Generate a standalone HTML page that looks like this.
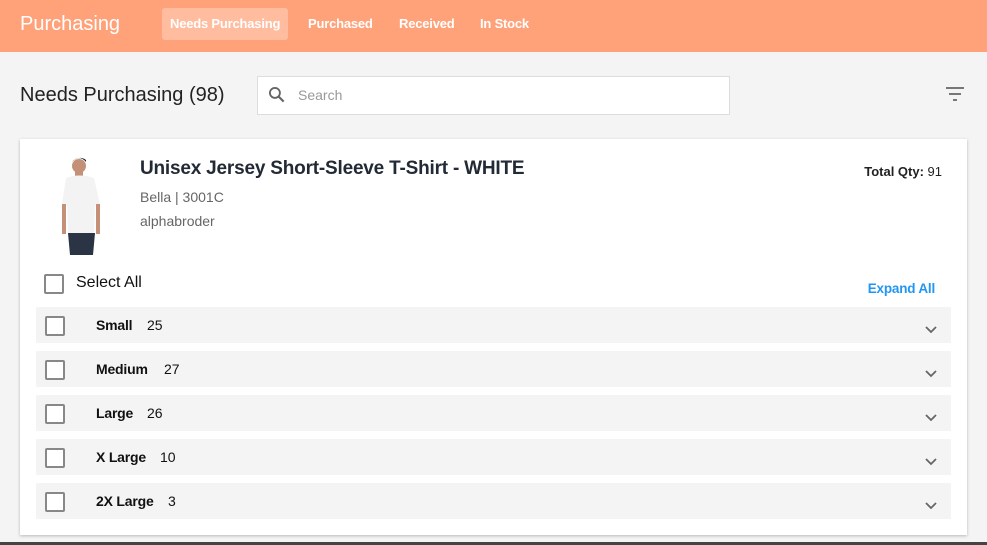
<!DOCTYPE html>
<html><head><style>
*{margin:0;padding:0;box-sizing:border-box}
body{width:987px;height:545px;background:#f4f4f4;font-family:"Liberation Sans",Arial,sans-serif;position:relative;overflow:hidden}
.top{position:absolute;left:0;top:0;width:987px;height:52px;background:#ffa179}
.brand{position:absolute;left:20px;top:13px;color:#fff;font-size:20px}
.nav{position:absolute;top:8px;height:32px;line-height:32px;color:#fff;font-size:13px;font-weight:bold;padding:0 8px;border-radius:3px;letter-spacing:-.2px}
.h1{position:absolute;left:20px;top:84px;font-size:20px;color:#222}
.search{position:absolute;left:257px;top:76px;width:473px;height:39px;background:#fff;border:1px solid #ddd}
.search span{position:absolute;left:40px;top:10px;font-size:14px;color:#999}
.card{position:absolute;left:20px;top:139px;width:947px;height:396px;background:#fff;box-shadow:0 1px 3px rgba(0,0,0,.25)}
.title{position:absolute;left:120px;top:19px;font-size:19px;color:#222a35;font-weight:bold;letter-spacing:-.2px}
.sub{position:absolute;left:120px;font-size:14px;color:#666}
.tq{position:absolute;right:25px;top:25px;font-size:13px;color:#222}
.cb{position:absolute;width:20px;height:20px;border:2px solid #888;border-radius:2px;background:#fff}
.row{position:absolute;left:16px;width:915px;height:36px;background:#f4f4f4}
.row .cb{left:9px;top:9px}
.row .l{position:absolute;left:60px;top:10px;font-size:14px;font-weight:bold;color:#111;letter-spacing:-.2px}
.row .n{position:absolute;top:10px;font-size:14px;color:#111}
.row svg{position:absolute;right:14px;top:19px}
.bot{position:absolute;left:0;top:542px;width:987px;height:3px;background:#444}
</style></head><body>
<div class="top">
<div class="brand">Purchasing</div>
<div class="nav" style="left:162px;background:#ffbc9f">Needs Purchasing</div>
<div class="nav" style="left:300px">Purchased</div>
<div class="nav" style="left:391px">Received</div>
<div class="nav" style="left:472px">In Stock</div>
</div>
<div class="h1">Needs Purchasing (98)</div>
<div class="search"><svg style="position:absolute;left:9px;top:8px" width="20" height="20" viewBox="0 0 24 24"><circle cx="9.5" cy="9.5" r="6" fill="none" stroke="#666" stroke-width="2.2"/><path d="M14 14l6 6" stroke="#666" stroke-width="2.6"/></svg><span>Search</span></div>
<svg style="position:absolute;left:945px;top:86px" width="20" height="16" viewBox="0 0 20 16"><path d="M1 2h18M4 8h12M8 14h4" stroke="#777" stroke-width="2"/></svg>
<div class="card">
<svg style="position:absolute;left:40px;top:17px" width="52" height="100" viewBox="0 0 52 100"><circle cx="19" cy="10" r="7" fill="#c49178"/><path d="M12 6q7-8 14 0v-2q-7-5-14 2z" fill="#222"/><rect x="15" y="15" width="8" height="6" fill="#c49178"/><path d="M6 22q13-5 28 0l6 26-5 1-1 28H8l-1-28-5-1z" fill="#f3f3f3"/><rect x="2" y="48" width="4" height="30" fill="#c49178"/><rect x="36" y="48" width="4" height="30" fill="#c49178"/><path d="M8 77h27l-2 22H10z" fill="#2a3444"/></svg>
<div class="title">Unisex Jersey Short-Sleeve T-Shirt - WHITE</div>
<div class="sub" style="top:50px">Bella | 3001C</div>
<div class="sub" style="top:74px">alphabroder</div>
<div class="tq"><b>Total Qty:</b> 91</div>
<div class="cb" style="left:24px;top:135px"></div>
<div style="position:absolute;left:56px;top:135px;font-size:16px;color:#111">Select All</div>
<div style="position:absolute;right:32px;top:142px;font-size:13.5px;font-weight:bold;color:#2196f3;letter-spacing:-.2px">Expand All</div>
<div class="row" style="top:168px"><div class="cb"></div><div class="l">Small</div><div class="n" style="left:111px">25</div><svg width="12" height="8"><path d="M1 1l5 5 5-5" fill="none" stroke="#666" stroke-width="1.8"/></svg></div>
<div class="row" style="top:212px"><div class="cb"></div><div class="l">Medium</div><div class="n" style="left:128px">27</div><svg width="12" height="8"><path d="M1 1l5 5 5-5" fill="none" stroke="#666" stroke-width="1.8"/></svg></div>
<div class="row" style="top:256px"><div class="cb"></div><div class="l">Large</div><div class="n" style="left:111px">26</div><svg width="12" height="8"><path d="M1 1l5 5 5-5" fill="none" stroke="#666" stroke-width="1.8"/></svg></div>
<div class="row" style="top:300px"><div class="cb"></div><div class="l">X Large</div><div class="n" style="left:124px">10</div><svg width="12" height="8"><path d="M1 1l5 5 5-5" fill="none" stroke="#666" stroke-width="1.8"/></svg></div>
<div class="row" style="top:344px"><div class="cb"></div><div class="l">2X Large</div><div class="n" style="left:132px">3</div><svg width="12" height="8"><path d="M1 1l5 5 5-5" fill="none" stroke="#666" stroke-width="1.8"/></svg></div>
</div>
<div class="bot"></div>
</body></html>
